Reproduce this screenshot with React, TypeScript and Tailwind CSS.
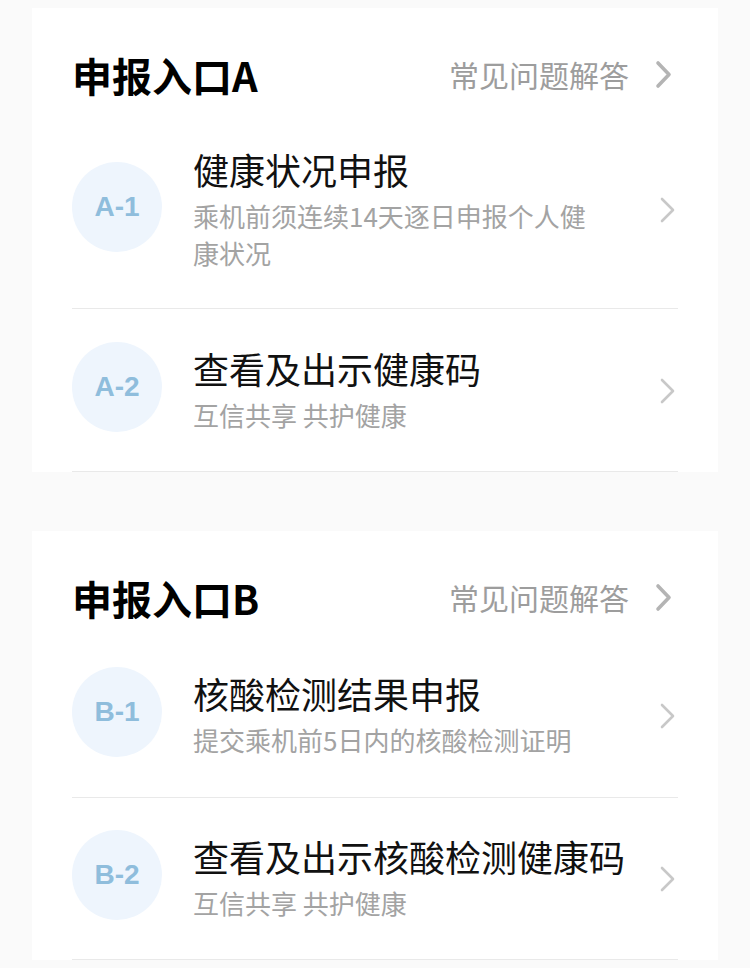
import React from "react";

type Entry = {
  code: string;
  title: string;
  desc: string;
  pt: string;
  pb: string;
};

type Section = {
  name: string;
  entries: Entry[];
};

const sections: Section[] = [
  {
    name: "申报入口A",
    entries: [
      { code: "A-1", title: "健康状况申报", desc: "乘机前须连续14天逐日申报个人健康状况", pt: "pt-[35px]", pb: "pb-[37px]" },
      { code: "A-2", title: "查看及出示健康码", desc: "互信共享 共护健康", pt: "pt-[35px]", pb: "pb-[37px]" },
    ],
  },
  {
    name: "申报入口B",
    entries: [
      { code: "B-1", title: "核酸检测结果申报", desc: "提交乘机前5日内的核酸检测证明", pt: "pt-[35px]", pb: "pb-[38px]" },
      { code: "B-2", title: "查看及出示核酸检测健康码", desc: "互信共享 共护健康", pt: "pt-[34px]", pb: "pb-[37px]" },
    ],
  },
];

const cjk = { fontFamily: '"Noto Sans CJK SC", "Noto Sans", sans-serif' };

function BoldChevron() {
  return (
    <svg width="17" height="29" viewBox="0 0 17 29" fill="none">
      <polyline
        points="3,3 14,14.5 3,26"
        stroke="#b4b4b4"
        strokeWidth="3.6"
        strokeLinecap="round"
        strokeLinejoin="round"
      />
    </svg>
  );
}

function RowChevron() {
  return (
    <svg width="17" height="28" viewBox="0 0 17 28" fill="none">
      <polyline
        points="3,3 14,14 3,25"
        stroke="#c8c8c8"
        strokeWidth="2.6"
        strokeLinecap="round"
        strokeLinejoin="round"
      />
    </svg>
  );
}

function EntryRow({ entry }: { entry: Entry }) {
  return (
    <div className={`flex items-center border-b border-[#e9e9e9] ${entry.pt} ${entry.pb}`}>
      {/* 编号圆标 */}
      <div className="w-[90px] h-[90px] -mt-[2px] mb-[2px] shrink-0 rounded-full bg-[#eef5fd] flex items-center justify-center">
        <span
          className="text-[28px] font-bold text-[#8fbddc] leading-none"
          style={{ fontFamily: '"Liberation Sans", Arial, sans-serif' }}
        >
          {entry.code}
        </span>
      </div>
      <div className="ml-[31px] flex-1 min-w-0">
        <p className="text-[36px] leading-[46px] text-[#111111]" style={cjk}>
          {entry.title}
        </p>
        <p className="mt-[5px] max-w-[400px] text-[26px] leading-[37px] text-[#a3a3a3]" style={cjk}>
          {entry.desc}
        </p>
      </div>
      <div className="ml-4 mr-[2px] -mb-[3px] shrink-0">
        <RowChevron />
      </div>
    </div>
  );
}

function SectionCard({ section }: { section: Section }) {
  return (
    <div className="mx-[32px] bg-white px-[40px]">
      {/* 标题栏 */}
      <div className="flex items-center justify-between pt-[44px] pb-[13px]">
        <h2 className="text-[40px] leading-[46px] font-bold text-black" style={cjk}>
          {section.name}
        </h2>
        <div className="flex items-center gap-[26px] mr-[6px] -mt-[2px]">
          <span className="text-[30px] leading-[40px] text-[#9d9d9d]" style={cjk}>
            常见问题解答
          </span>
          <BoldChevron />
        </div>
      </div>
      {section.entries.map((e) => (
        <EntryRow key={e.code} entry={e} />
      ))}
    </div>
  );
}

export default function App() {
  return (
    <div className="min-h-[968px] w-[750px] bg-[#fafafa] pt-[8px] pb-[8px]">
      <div className="flex flex-col gap-[59px]">
        {sections.map((s) => (
          <SectionCard key={s.name} section={s} />
        ))}
      </div>
    </div>
  );
}
